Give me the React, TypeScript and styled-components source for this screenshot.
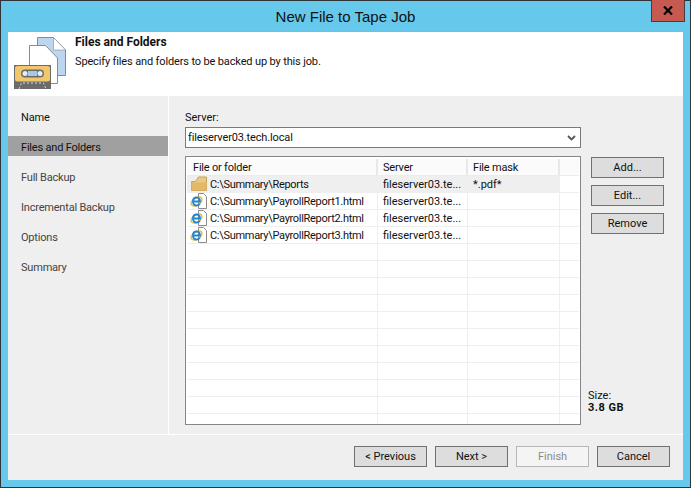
import React from "react";
import styled, { createGlobalStyle } from "styled-components";

const Global = createGlobalStyle`
  html, body { margin: 0; padding: 0; background: #68c9ea; }
  #root { width: 691px; height: 488px; }
  * { box-sizing: border-box; }
`;

const Frame = styled.div`
  width: 691px;
  height: 488px;
  background: #66c8ea;
  border: 1px solid #2f3437;
  padding: 0 7px 7px 7px;
  display: flex;
  flex-direction: column;
  font-family: Roboto, "Liberation Sans", Arial, sans-serif;
  font-size: 11px;
  color: #111;
  position: relative;
`;

const TitleBar = styled.div`
  height: 30px;
  flex: none;
  display: flex;
  align-items: center;
  justify-content: center;
  font-family: "Liberation Sans", Arial, sans-serif;
  font-size: 15px;
  color: #111;
  padding-top: 1px;
`;

const CloseButton = styled.div`
  position: absolute;
  top: -1px;
  right: 5px;
  width: 34px;
  height: 22px;
  background: #c75a50;
  border: 1px solid #4d3a3c;
  border-top: none;
  display: flex;
  align-items: center;
  justify-content: center;
`;

const Client = styled.div`
  flex: 1;
  display: flex;
  flex-direction: column;
  background: #efefef;
  min-height: 0;
`;

const Header = styled.header`
  height: 65px;
  flex: none;
  background: #fff;
  display: flex;
  border-top: 1px solid #8fb4c6;
`;

const HeaderIcon = styled.svg`
  width: 60px;
  height: 64px;
  margin-right: 7px;
  flex: none;
`;

const HeaderText = styled.div`
  padding-top: 3px;
`;

const HeaderTitle = styled.div`
  font-weight: 700;
  font-size: 12px;
  line-height: 15px;
`;

const HeaderSub = styled.div`
  margin-top: 4px;
  line-height: 15px;
  letter-spacing: -0.14px;
`;

const Middle = styled.div`
  flex: 1;
  display: flex;
  min-height: 0;
  border-bottom: 1px solid #fff;
`;

const Sidebar = styled.nav`
  width: 161px;
  flex: none;
  border-right: 1px solid #fff;
  padding-top: 10px;
  display: flex;
  flex-direction: column;
`;

const NavItem = styled.div<{ $active?: boolean; $dim?: boolean }>`
  height: 20px;
  margin-bottom: 10px;
  padding: 2px 0 0 13px;
  display: flex;
  align-items: center;
  width: 160px;
  letter-spacing: -0.2px;
  background: ${(p) => (p.$active ? "#a0a0a0" : "transparent")};
  color: ${(p) => (p.$dim ? "#444" : "#111")};
`;

const Content = styled.section`
  flex: 1;
  padding: 14px 0 9px 16px;
  display: flex;
  flex-direction: column;
  min-width: 0;
`;

const FieldLabel = styled.div`
  line-height: 15px;
  margin-bottom: 2px;
`;

const Combo = styled.div`
  width: 396px;
  height: 21px;
  background: #fff;
  border: 1px solid #7a7a7a;
  display: flex;
  align-items: center;
  justify-content: space-between;
  padding: 0 4px 0 2px;
  margin-bottom: 8px;
  letter-spacing: -0.14px;
`;

const Lower = styled.div`
  flex: 1;
  display: flex;
  min-height: 0;
`;

const List = styled.div`
  width: 396px;
  height: 269px;
  background: #fff;
  border: 1px solid #85858c;
  padding: 1px;
  flex: none;
  overflow: hidden;
  position: relative;
`;

const cols = "191px 90px 92px 1fr";

const HeadRow = styled.div`
  display: grid;
  grid-template-columns: ${cols};
  height: 17px;
  margin-top: 1px;
  background: #fbfbfb;
  border-bottom: 1px solid #ececec;
`;

const HeadCell = styled.div`
  padding-left: 5px;
  display: flex;
  align-items: center;
  letter-spacing: -0.2px;
  border-right: 2px solid #e8e8e8;
  &:first-child { padding-left: 6px; }
  &:last-child { border-right: none; }
`;

const Row = styled.div<{ $selected?: boolean }>`
  display: grid;
  grid-template-columns: ${cols};
  height: 17px;
  background: linear-gradient(#efefef, #efefef) no-repeat left top / ${(p) => (p.$selected ? "373px 16px" : "0 0")};
  border-bottom: 1px solid #efefef;
`;

const Cell = styled.div`
  padding-left: 5px;
  display: flex;
  align-items: center;
  gap: 3px;
  border-right: 1px solid #efefef;
  white-space: nowrap;
  overflow: hidden;
  min-width: 0;
  &:first-child { padding-left: 3px; }
  &:last-child { border-right: none; }
`;

const FilePath = styled.span`
  letter-spacing: -0.3px;
`;

const RowIcon = styled.svg`
  width: 17px;
  height: 16px;
  flex: none;
`;

const Side = styled.aside`
  flex: 1;
  padding: 1px 0 0 10px;
  display: flex;
  flex-direction: column;
  gap: 7px;
`;

const Btn = styled.div<{ $focus?: boolean; $disabled?: boolean }>`
  width: 73px;
  height: 21px;
  flex: none;
  display: flex;
  align-items: center;
  justify-content: center;
  background: ${(p) => (p.$disabled ? "#f4f4f4" : "#dddddd")};
  border: 1px solid ${(p) => (p.$focus ? "#3f7fae" : p.$disabled ? "#b4b8b8" : "#707070")};
  color: ${(p) => (p.$disabled ? "#8a8a8a" : "#111")};
`;

const SizeBox = styled.div`
  margin-top: auto;
  margin-left: -3px;
  padding-bottom: 11px;
  line-height: 12px;
`;

const SizeValue = styled.div`
  font-weight: 700;
  letter-spacing: 0.5px;
`;

const Footer = styled.footer`
  height: 45px;
  flex: none;
  display: flex;
  justify-content: flex-end;
  gap: 8px;
  padding: 11px 13px 0 0;
`;

const Folder = () => (
  <RowIcon viewBox="0 0 17 16">
    <path d="M1.5 14.5V5.5H5.5L8.5 1H16.5V14.5Z" fill="#ecc883" stroke="#c9a258" />
    <path d="M1.5 14.5V6.5H16.5V14.5Z" fill="#e3b86a" />
  </RowIcon>
);

const IeFile = () => (
  <RowIcon viewBox="0 0 17 16">
    <path d="M8.5 0.5H13.5L16.5 3.5V15.5H8.5Z" fill="#fff" stroke="#8a8a8a" />
    <ellipse cx="6.5" cy="8.5" rx="6" ry="3.6" fill="none" stroke="#f0b92a" strokeWidth="1.5" transform="rotate(-35 6.5 8.5)" />
    <path d="M3 8.5H10C10 6 8.7 4.5 6.7 4.5C4.5 4.5 3 6.3 3 8.6C3 11 4.5 12.6 6.7 12.6C8.2 12.6 9.3 11.9 9.9 10.7" fill="none" stroke="#1f86d6" strokeWidth="1.9" />
  </RowIcon>
);

const rows = ["C:\\Summary\\PayrollReport1.html", "C:\\Summary\\PayrollReport2.html", "C:\\Summary\\PayrollReport3.html"];
const emptyRows = Array.from({ length: 11 });

export default function App() {
  return (
    <Frame>
      <Global />
      <TitleBar>New File to Tape Job</TitleBar>
      <CloseButton>
        <svg width="10" height="9" viewBox="0 0 10 9">
          <path d="M1 0.5L9 8.5M9 0.5L1 8.5" stroke="#000" strokeWidth="2.2" />
        </svg>
      </CloseButton>
      <Client>
        <Header>
          <HeaderIcon viewBox="8 32 60 64">
            <path d="M37.5 37.5H53.5L65.5 50V75.5H40Z" fill="#bcd6ef" stroke="none" />
            <path d="M37.5 45V37.5H53.5L65.5 50V75.5H58" fill="none" stroke="#8a8a8a" />
            <path d="M53.5 37.5V50H65.5Z" fill="#fff" stroke="#8a8a8a" strokeWidth="0.6" />
            <path d="M29.5 65V45.5H45.5L57.5 58V83.5H51" fill="#fff" stroke="#8a8a8a" />
            <rect x="14" y="65" width="37" height="24" fill="#6b6b6b" />
            <rect x="15" y="66" width="35" height="15.5" rx="2" fill="#f2c66d" />
            <rect x="21" y="69.5" width="23" height="8" rx="4" fill="#6b6b6b" />
            <rect x="28" y="71" width="9" height="5" fill="#a9c6e6" />
            <circle cx="25" cy="73.5" r="2.5" fill="#e6edf3" />
            <circle cx="40" cy="73.5" r="2.5" fill="#e6edf3" />
            <path d="M19 89L21.5 83H43.5L46 89" fill="none" stroke="#dcdcdc" strokeWidth="1" strokeDasharray="2 2" />
          </HeaderIcon>
          <HeaderText>
            <HeaderTitle>Files and Folders</HeaderTitle>
            <HeaderSub>Specify files and folders to be backed up by this job.</HeaderSub>
          </HeaderText>
        </Header>
        <Middle>
          <Sidebar>
            <NavItem>Name</NavItem>
            <NavItem $active>Files and Folders</NavItem>
            <NavItem $dim>Full Backup</NavItem>
            <NavItem $dim>Incremental Backup</NavItem>
            <NavItem $dim>Options</NavItem>
            <NavItem $dim>Summary</NavItem>
          </Sidebar>
          <Content>
            <FieldLabel>Server:</FieldLabel>
            <Combo>
              <span>fileserver03.tech.local</span>
              <svg width="9" height="6" viewBox="0 0 9 6">
                <path d="M1 1L4.5 4.5L8 1" fill="none" stroke="#555" strokeWidth="1.8" />
              </svg>
            </Combo>
            <Lower>
              <List>
                <HeadRow>
                  <HeadCell>File or folder</HeadCell>
                  <HeadCell>Server</HeadCell>
                  <HeadCell>File mask</HeadCell>
                  <HeadCell />
                </HeadRow>
                <Row $selected>
                  <Cell><Folder /><FilePath>C:\Summary\Reports</FilePath></Cell>
                  <Cell>fileserver03.te...</Cell>
                  <Cell>*.pdf*</Cell>
                  <Cell />
                </Row>
                {rows.map((r) => (
                  <Row key={r}>
                    <Cell><IeFile /><FilePath>{r}</FilePath></Cell>
                    <Cell>fileserver03.te...</Cell>
                    <Cell />
                    <Cell />
                  </Row>
                ))}
                {emptyRows.map((_, i) => (
                  <Row key={i}>
                    <Cell />
                    <Cell />
                    <Cell />
                    <Cell />
                  </Row>
                ))}
              </List>
              <Side>
                <Btn>Add...</Btn>
                <Btn $focus>Edit...</Btn>
                <Btn>Remove</Btn>
                <SizeBox>
                  <div>Size:</div>
                  <SizeValue>3.8 GB</SizeValue>
                </SizeBox>
              </Side>
            </Lower>
          </Content>
        </Middle>
        <Footer>
          <Btn>&lt; Previous</Btn>
          <Btn>Next &gt;</Btn>
          <Btn $disabled>Finish</Btn>
          <Btn>Cancel</Btn>
        </Footer>
      </Client>
    </Frame>
  );
}
